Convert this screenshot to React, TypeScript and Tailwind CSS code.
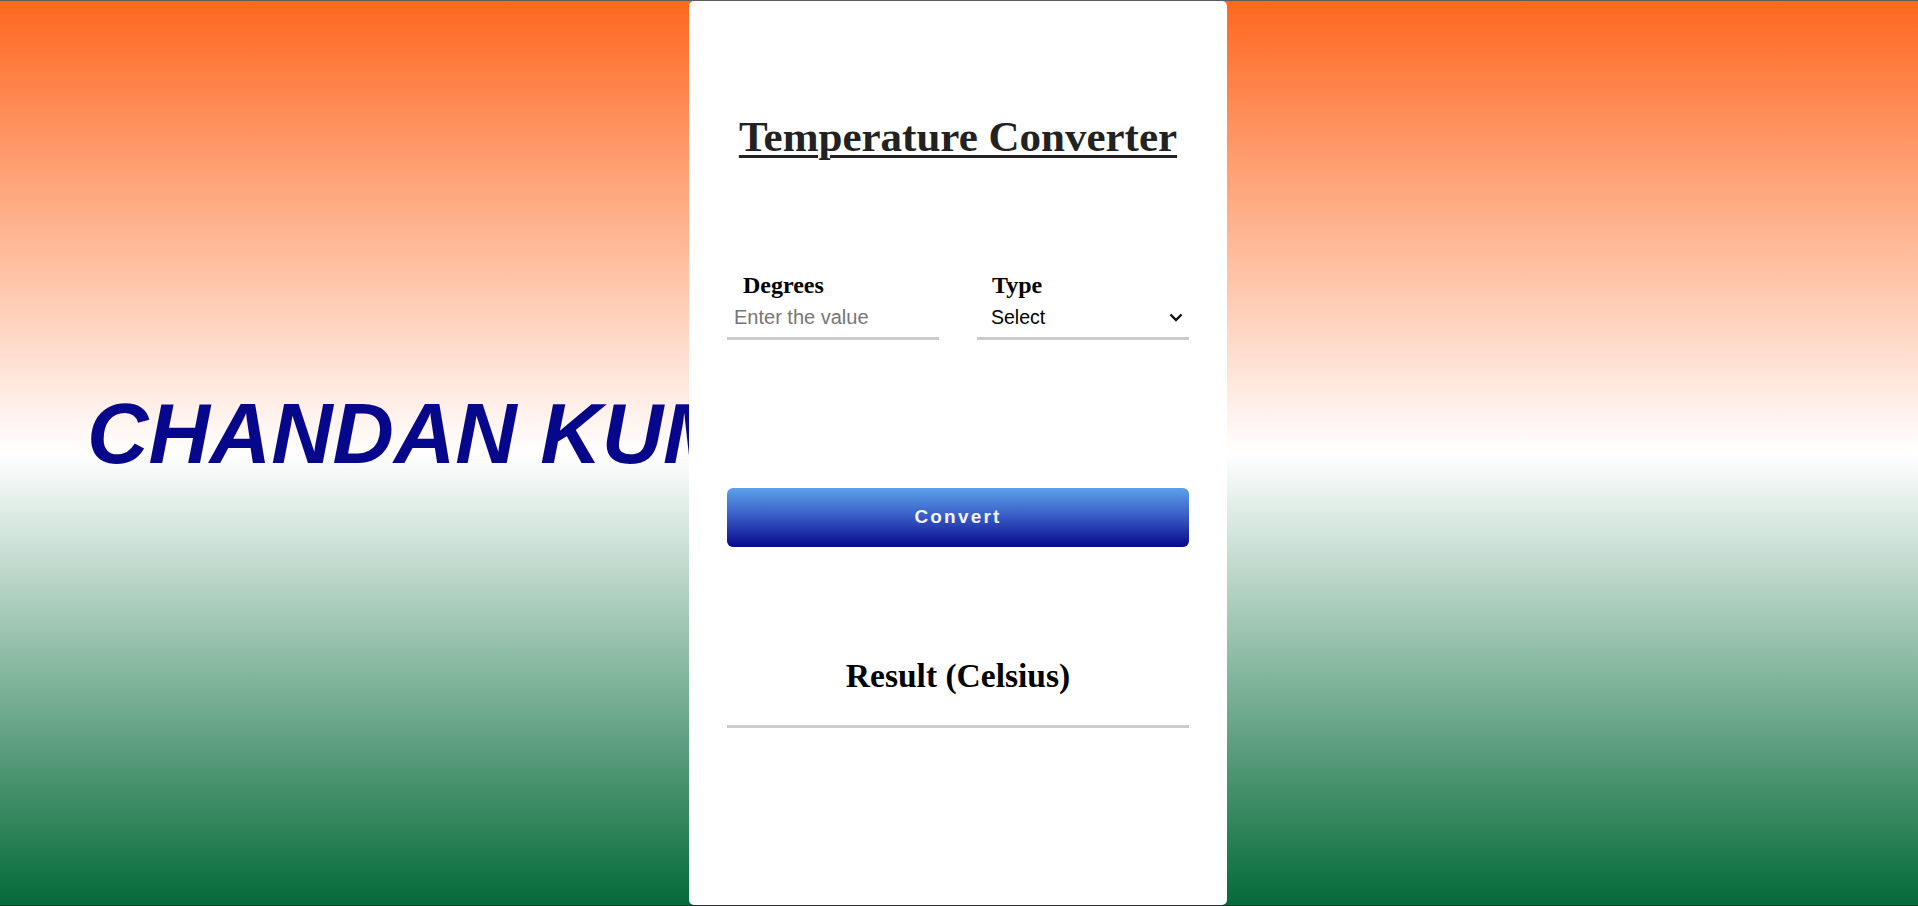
export default function App() {
  return (
    <div className="flex h-[906px] w-full flex-col overflow-hidden">
      <div className="h-px w-full bg-[#5c5c5c]" />
      <div className="relative flex flex-1 justify-center bg-[linear-gradient(to_bottom,#ff671f_0%,#ffffff_50%,#046a38_100%)]">
        <h1 className="absolute left-[87px] top-[390px] whitespace-nowrap font-['Liberation_Sans',Arial,sans-serif] text-[85px] font-bold italic leading-none text-[#07078b]">
          CHANDAN KUMAR
        </h1>

        <div className="relative mr-[2px] flex h-full w-[538px] flex-col rounded-[5px] bg-white px-[38px] pt-[114px]">
          <h2 className="text-center font-['Liberation_Serif','Times_New_Roman',serif] text-[43px] font-bold leading-none text-[#222] underline decoration-[3px] underline-offset-[4px]">
            Temperature Converter
          </h2>

          <div className="mt-[115px] grid grid-cols-2 gap-[38px]">
            <div className="flex flex-col">
              <label className="pl-[16px] font-['Liberation_Serif','Times_New_Roman',serif] text-[24px] font-bold leading-none text-black">
                Degrees
              </label>
              <input
                type="text"
                placeholder="Enter the value"
                className="mt-[1px] h-[42px] w-full border-b-[3px] border-[#cccccc] bg-transparent pl-[7px] font-['Liberation_Sans',Arial,sans-serif] text-[20px] text-black outline-none placeholder:text-[#767676]"
              />
            </div>
            <div className="flex flex-col">
              <label className="pl-[15px] font-['Liberation_Serif','Times_New_Roman',serif] text-[24px] font-bold leading-none text-black">
                Type
              </label>
              <div className="mt-[1px] flex h-[42px] w-full items-center justify-between border-b-[3px] border-[#cccccc] pl-[14px] pr-[6px]">
                <span className="font-['Liberation_Sans',Arial,sans-serif] text-[19.5px] text-black">Select</span>
                <svg width="14" height="9" viewBox="0 0 14 9" fill="none">
                  <polyline points="1.5,1.5 7,7 12.5,1.5" stroke="#111" strokeWidth="2.4" />
                </svg>
              </div>
            </div>
          </div>

          <button className="mt-[148px] h-[59px] w-full rounded-[6px] bg-[linear-gradient(to_bottom,#5ba2ea,#3b60c8_45%,#08088e)] font-['Liberation_Sans',Arial,sans-serif] text-[19px] font-bold tracking-[2.2px] text-[#f2f4ff]">
            Convert
          </button>

          <h3 className="mt-[112px] text-center font-['Liberation_Serif','Times_New_Roman',serif] text-[33.5px] font-bold leading-none text-black">
            Result (Celsius)
          </h3>
          <div className="mt-[32px] h-[3px] w-full bg-[#cccccc]" />
        </div>
      </div>
      <div className="h-px w-full bg-[#2e2e2e]" />
    </div>
  );
}
